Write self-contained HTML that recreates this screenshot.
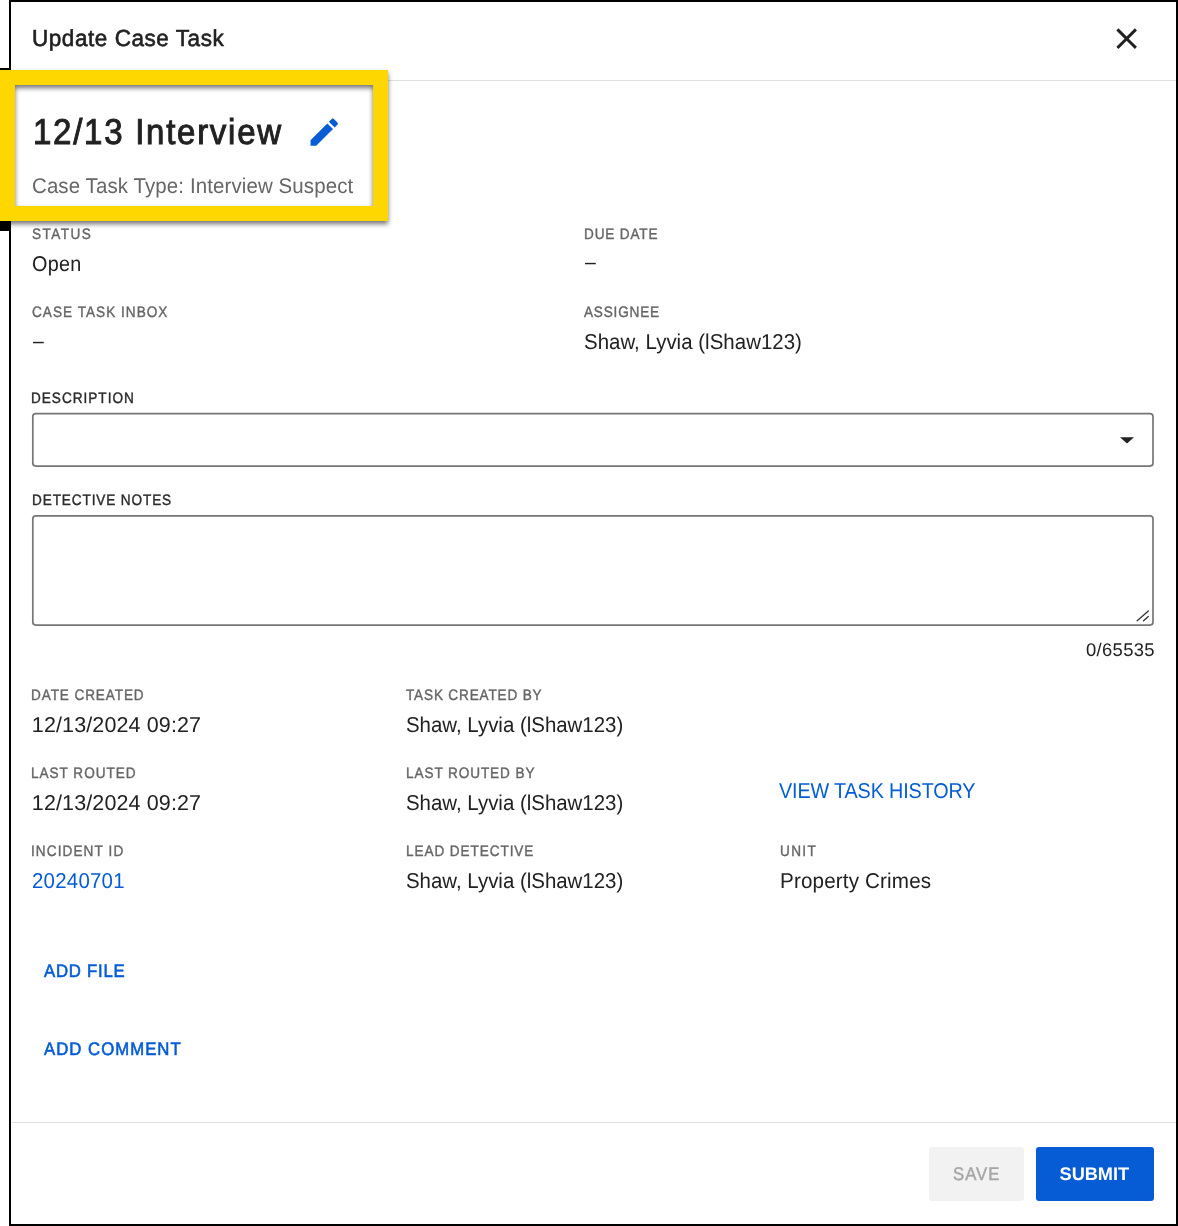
<!DOCTYPE html>
<html><head><meta charset="utf-8"><style>
html,body{margin:0;padding:0;background:#fff;width:1178px;height:1226px;overflow:hidden;position:relative;font-family:"Liberation Sans",sans-serif;}
.t{position:absolute;white-space:nowrap;line-height:1;text-rendering:geometricPrecision;}
.abs{position:absolute;}
</style></head><body>
<div id="root" style="position:absolute;left:0;top:0;width:1178px;height:1226px;will-change:transform;background:#fff">
<div class="abs" style="left:9px;top:0;width:1165px;height:1222px;border:2px solid #000;"></div>
<div class="abs" style="left:11px;top:80px;width:1165px;height:1px;background:#e0e0e0;"></div>
<div class="abs" style="left:12px;top:1122px;width:1164px;height:1px;background:#e0e0e0;"></div>
<div class="abs" style="left:0;top:68px;width:11px;height:2px;background:#000;"></div>
<div class="abs" style="left:0;top:221px;width:11px;height:10px;background:#000;"></div>
<svg class="abs" style="left:1109.2px;top:21.4px" width="35.3" height="35.3" viewBox="0 0 24 24"><path fill="#212121" d="M19 6.41L17.59 5 12 10.59 6.41 5 5 6.41 10.59 12 5 17.59 6.41 19 12 13.41 17.59 19 19 17.59 13.41 12z"/></svg>
<svg class="abs" style="left:305.7px;top:113.7px" width="36.4" height="36.4" viewBox="0 0 24 24"><path fill="#055cd4" d="M3 17.25V21h3.75L17.81 9.94l-3.75-3.75L3 17.25zM20.71 7.04c.39-.39.39-1.02 0-1.41l-2.34-2.34c-.39-.39-1.02-.39-1.41 0l-1.83 1.83 3.75 3.75 1.83-1.83z"/></svg>
<svg class="abs" style="left:0;top:0" width="1178" height="1226">
  <rect x="32.8" y="413.6" width="1120.2" height="52.5" rx="3" fill="none" stroke="#767676" stroke-width="1.7"/>
  <path d="M1120 437.3h14l-7 6.2z" fill="#222"/>
  <rect x="32.8" y="515.9" width="1120.2" height="109.2" rx="3" fill="none" stroke="#767676" stroke-width="1.7"/>
  <path d="M1137.2 620.7L1148.3 610.9M1143.5 620.7L1148.3 616.4" stroke="#333" stroke-width="1.3" stroke-linecap="round"/>
</svg>
<div class="abs" style="left:929px;top:1147px;width:95px;height:54px;background:#f2f2f2;border-radius:3px;"></div>
<div class="abs" style="left:1036px;top:1147px;width:118px;height:54px;background:#055cd4;border-radius:3px;"></div>
<div class="t" id="title" style="left:31.71px;top:27.41px;font-size:23.2px;letter-spacing:0.574px;color:#212121;transform:scaleX(0.97);transform-origin:0 0;-webkit-text-stroke:0.6px #212121;">Update Case Task</div>
<div class="t" id="heading" style="left:32.92px;top:114.80px;font-size:35.9px;letter-spacing:1.877px;color:#212121;transform:scaleX(0.92);transform-origin:0 0;-webkit-text-stroke:1.0px #212121;">12/13 Interview</div>
<div class="t" id="sub" style="left:32.41px;top:175.81px;font-size:21.3px;letter-spacing:0.121px;color:#666666;transform:scaleX(0.96);transform-origin:0 0;">Case Task Type: Interview Suspect</div>
<div class="t" id="l_status" style="left:32.40px;top:226.80px;font-size:15.1px;letter-spacing:1.606px;color:#666666;transform:scaleX(0.9);transform-origin:0 0;-webkit-text-stroke:0.4px #666666;">STATUS</div>
<div class="t" id="v_open" style="left:32.27px;top:253.91px;font-size:21.5px;letter-spacing:0.300px;color:#212121;transform:scaleX(0.92);transform-origin:0 0;">Open</div>
<div class="t" id="l_due" style="left:583.99px;top:226.81px;font-size:15.1px;letter-spacing:0.933px;color:#666666;transform:scaleX(0.9);transform-origin:0 0;-webkit-text-stroke:0.4px #666666;">DUE DATE</div>
<div class="t" id="v_due" style="left:585.12px;top:251.80px;font-size:21.5px;letter-spacing:0.000px;color:#212121;transform:scaleX(0.9);transform-origin:0 0;">–</div>
<div class="t" id="l_inbox" style="left:32.29px;top:304.80px;font-size:15.1px;letter-spacing:1.139px;color:#666666;transform:scaleX(0.9);transform-origin:0 0;-webkit-text-stroke:0.4px #666666;">CASE TASK INBOX</div>
<div class="t" id="v_inbox" style="left:33.04px;top:330.90px;font-size:21.5px;letter-spacing:0.000px;color:#212121;transform:scaleX(0.9);transform-origin:0 0;">–</div>
<div class="t" id="l_assignee" style="left:584.48px;top:304.80px;font-size:15.1px;letter-spacing:0.891px;color:#666666;transform:scaleX(0.9);transform-origin:0 0;-webkit-text-stroke:0.4px #666666;">ASSIGNEE</div>
<div class="t" id="v_assignee" style="left:583.82px;top:331.91px;font-size:21.5px;letter-spacing:0.033px;color:#212121;transform:scaleX(0.95);transform-origin:0 0;">Shaw, Lyvia (lShaw123)</div>
<div class="t" id="l_desc" style="left:31.28px;top:391.01px;font-size:15.1px;letter-spacing:1.108px;color:#2b2b2b;transform:scaleX(0.9);transform-origin:0 0;-webkit-text-stroke:0.4px #2b2b2b;">DESCRIPTION</div>
<div class="t" id="l_notes" style="left:31.68px;top:493.01px;font-size:15.1px;letter-spacing:0.981px;color:#2b2b2b;transform:scaleX(0.9);transform-origin:0 0;-webkit-text-stroke:0.4px #2b2b2b;">DETECTIVE NOTES</div>
<div class="t" id="counter" style="left:1086.00px;top:640.71px;font-size:18.4px;letter-spacing:0.338px;color:#212121;">0/65535</div>
<div class="t" id="l_created" style="left:31.30px;top:687.91px;font-size:15.1px;letter-spacing:0.988px;color:#666666;transform:scaleX(0.9);transform-origin:0 0;-webkit-text-stroke:0.4px #666666;">DATE CREATED</div>
<div class="t" id="v_created" style="left:31.82px;top:714.81px;font-size:21.5px;letter-spacing:0.124px;color:#212121;">12/13/2024 09:27</div>
<div class="t" id="l_createdby" style="left:406.41px;top:687.91px;font-size:15.1px;letter-spacing:0.917px;color:#666666;transform:scaleX(0.9);transform-origin:0 0;-webkit-text-stroke:0.4px #666666;">TASK CREATED BY</div>
<div class="t" id="v_createdby" style="left:405.78px;top:714.80px;font-size:21.5px;letter-spacing:0.001px;color:#212121;transform:scaleX(0.95);transform-origin:0 0;">Shaw, Lyvia (lShaw123)</div>
<div class="t" id="l_routed" style="left:31.39px;top:765.91px;font-size:15.1px;letter-spacing:1.079px;color:#666666;transform:scaleX(0.9);transform-origin:0 0;-webkit-text-stroke:0.4px #666666;">LAST ROUTED</div>
<div class="t" id="v_routed" style="left:31.82px;top:792.81px;font-size:21.5px;letter-spacing:0.124px;color:#212121;">12/13/2024 09:27</div>
<div class="t" id="l_routedby" style="left:406.19px;top:765.91px;font-size:15.1px;letter-spacing:1.001px;color:#666666;transform:scaleX(0.9);transform-origin:0 0;-webkit-text-stroke:0.4px #666666;">LAST ROUTED BY</div>
<div class="t" id="v_routedby" style="left:405.78px;top:792.81px;font-size:21.5px;letter-spacing:0.001px;color:#212121;transform:scaleX(0.95);transform-origin:0 0;">Shaw, Lyvia (lShaw123)</div>
<div class="t" id="history" style="left:779.43px;top:780.90px;font-size:21.5px;letter-spacing:-0.140px;color:#055cd4;transform:scaleX(0.92);transform-origin:0 0;">VIEW TASK HISTORY</div>
<div class="t" id="l_incident" style="left:31.10px;top:843.90px;font-size:15.1px;letter-spacing:1.217px;color:#666666;transform:scaleX(0.9);transform-origin:0 0;-webkit-text-stroke:0.4px #666666;">INCIDENT ID</div>
<div class="t" id="v_incident" style="left:31.77px;top:870.81px;font-size:21.5px;letter-spacing:0.257px;color:#055cd4;transform:scaleX(0.95);transform-origin:0 0;">20240701</div>
<div class="t" id="l_lead" style="left:406.19px;top:843.90px;font-size:15.1px;letter-spacing:1.016px;color:#666666;transform:scaleX(0.9);transform-origin:0 0;-webkit-text-stroke:0.4px #666666;">LEAD DETECTIVE</div>
<div class="t" id="v_lead" style="left:405.78px;top:870.81px;font-size:21.5px;letter-spacing:0.001px;color:#212121;transform:scaleX(0.95);transform-origin:0 0;">Shaw, Lyvia (lShaw123)</div>
<div class="t" id="l_unit" style="left:779.75px;top:843.91px;font-size:15.1px;letter-spacing:1.525px;color:#666666;transform:scaleX(0.9);transform-origin:0 0;-webkit-text-stroke:0.4px #666666;">UNIT</div>
<div class="t" id="v_unit" style="left:779.93px;top:870.80px;font-size:21.5px;letter-spacing:0.150px;color:#212121;transform:scaleX(0.96);transform-origin:0 0;">Property Crimes</div>
<div class="t" id="addfile" style="left:44.34px;top:962.01px;font-size:18.2px;letter-spacing:0.828px;color:#055cd4;transform:scaleX(0.92);transform-origin:0 0;-webkit-text-stroke:0.6px #055cd4;">ADD FILE</div>
<div class="t" id="addcomment" style="left:44.34px;top:1040.01px;font-size:18.2px;letter-spacing:1.117px;color:#055cd4;transform:scaleX(0.92);transform-origin:0 0;-webkit-text-stroke:0.6px #055cd4;">ADD COMMENT</div>
<div class="t" id="save" style="left:953.22px;top:1164.91px;font-size:18.2px;letter-spacing:1.055px;color:#a6a6a6;transform:scaleX(0.92);transform-origin:0 0;-webkit-text-stroke:0.45px #a6a6a6;">SAVE</div>
<div class="t" id="submit" style="left:1059.60px;top:1164.91px;font-size:18.2px;letter-spacing:-0.049px;color:#ffffff;font-weight:bold;">SUBMIT</div>

<div class="abs" style="left:0;top:70px;width:358px;height:121px;border:15px solid #ffd700;filter:drop-shadow(0 3px 2.8px rgba(0,0,0,0.55));"></div>
</div>
</body></html>
